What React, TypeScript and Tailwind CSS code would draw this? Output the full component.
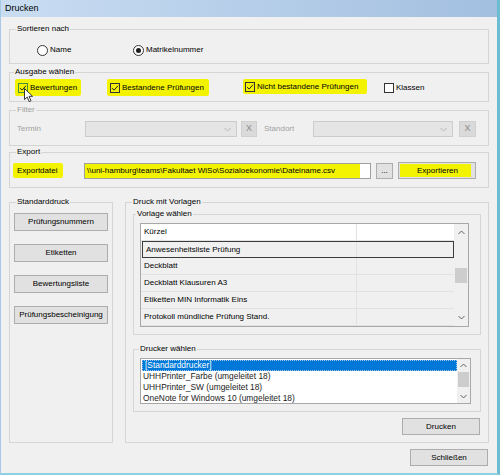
import React from "react";

interface GroupProps {
  label: string;
  className?: string;
  legendClass?: string;
  children?: React.ReactNode;
}

// Windows-style group box
const Group: React.FC<GroupProps> = ({
  label,
  className = "",
  legendClass = "",
  children,
}) => (
  <fieldset className={`border border-[#d5d5d5] ${className}`}>
    <legend className={`px-[1px] leading-[10px] ${legendClass}`}>
      {label}
    </legend>
    {children}
  </fieldset>
);

const Check = () => (
  <svg viewBox="0 0 10 10" width="8" height="8">
    <path
      d="M1.3 5.2 L3.9 7.6 L8.7 2.2"
      fill="none"
      stroke="#1e1e1e"
      strokeWidth="1.2"
    />
  </svg>
);

const CheckBox: React.FC<{ checked?: boolean; className?: string }> = ({
  checked,
  className = "border-[#333333]",
}) => (
  <span
    className={`w-[10px] h-[10px] shrink-0 border flex items-center justify-center ${className}`}
  >
    {checked && <Check />}
  </span>
);

const Radio: React.FC<{ checked?: boolean }> = ({ checked }) => (
  <span className="w-[11px] h-[11px] shrink-0 rounded-full border border-[#333333] bg-white flex items-center justify-center">
    {checked && <span className="w-[5px] h-[5px] rounded-full bg-[#1e1e1e]" />}
  </span>
);

const Chevron: React.FC<{ up?: boolean; color?: string }> = ({
  up,
  color = "#606060",
}) => (
  <svg width="7" height="5" viewBox="0 0 7 5">
    <path
      d={up ? "M0.5 4 L3.5 1 L6.5 4" : "M0.5 1 L3.5 4 L6.5 1"}
      fill="none"
      stroke={color}
      strokeWidth="1"
    />
  </svg>
);

interface WinButtonProps {
  className?: string;
  children?: React.ReactNode;
}

const WinButton: React.FC<WinButtonProps> = ({ className = "", children }) => (
  <button
    className={`shrink-0 bg-[#e1e1e1] border border-[#adadad] flex items-center justify-center leading-none text-black ${className}`}
  >
    {children}
  </button>
);

const vorlagen = [
  "Kürzel",
  "Anwesenheitsliste Prüfung",
  "Deckblatt",
  "Deckblatt Klausuren A3",
  "Etiketten MIN Informatik Eins",
  "Protokoll mündliche Prüfung Stand.",
];

const drucker = [
  "[Standarddrucker]",
  "UHHPrinter_Farbe (umgeleitet 18)",
  "UHHPrinter_SW (umgeleitet 18)",
  "OneNote for Windows 10 (umgeleitet 18)",
];

const App: React.FC = () => {
  return (
    <div className="relative w-[500px] h-[475px] bg-[#f0f0f0] flex flex-col border-l border-l-[#a9c9e8] border-r-[3px] border-r-[#6cbcd2] border-b-2 border-b-[#8dd0e3] font-['Liberation_Sans',Arial,sans-serif] text-[8px] text-black overflow-hidden">
      {/* Titelleiste */}
      <div className="h-[17px] shrink-0 flex items-center pl-[4px] text-[9px] bg-linear-to-r from-[#c9ddf2] to-[#a3bfe0]">
        Drucken
      </div>

      <div className="flex flex-col pl-[8px]">
        {/* Sortieren nach */}
        <Group
          label="Sortieren nach"
          className="mt-[7px] w-[480px] h-[40px]"
          legendClass="ml-[6px]"
        >
          <div className="h-[29px] pt-[3px] pl-[27px] flex items-center">
            <label className="w-[96px] flex items-center gap-[2px]">
              <Radio />
              <span>Name</span>
            </label>
            <label className="flex items-center gap-[2px]">
              <Radio checked />
              <span>Matrikelnummer</span>
            </label>
          </div>
        </Group>

        {/* Ausgabe wählen */}
        <Group
          label="Ausgabe wählen"
          className="mt-[3px] w-[480px] h-[35px]"
          legendClass="ml-[4px]"
        >
          <div className="h-[24px] pb-[3px] pl-[5px] flex items-center">
            <label className="w-[66px] h-[17px] pl-[3px] flex items-center gap-[2px] bg-[#f3f300] rounded-[2px]">
              <CheckBox checked className="border-[#4a8f3a]" />
              <span>Bewertungen</span>
            </label>
            <label className="ml-[26px] w-[102px] h-[17px] pl-[3px] flex items-center gap-[2px] bg-[#f3f300] rounded-[2px]">
              <CheckBox checked />
              <span>Bestandene Prüfungen</span>
            </label>
            <label className="ml-[34px] w-[124px] h-[15px] -mt-[2px] pl-[2px] flex items-center gap-[2px] bg-[#f3f300] rounded-[2px]">
              <CheckBox checked />
              <span>Nicht bestandene Prüfungen</span>
            </label>
            <label className="ml-[17px] flex items-center gap-[2px]">
              <CheckBox className="border-[#333333] bg-white" />
              <span>Klassen</span>
            </label>
          </div>
        </Group>

        {/* Filter (deaktiviert) */}
        <Group
          label="Filter"
          className="mt-[3px] w-[480px] h-[41px] text-[#a0a0a0]"
          legendClass="ml-[6px]"
        >
          <div className="pt-[6px] pl-[7px] flex items-center">
            <span className="w-[68px]">Termin</span>
            <div className="w-[152px] h-[16px] bg-[#e5e5e5] border border-[#cccccc] flex items-center justify-end pr-[5px]">
              <Chevron color="#b5b5b5" />
            </div>
            <div className="ml-[4px] w-[16px] h-[16px] bg-[#dadada] border border-[#d0d0d0] flex items-center justify-center text-[9px] text-[#8a8a8a]">
              X
            </div>
            <span className="ml-[7px] w-[49px]">Standort</span>
            <div className="w-[140px] h-[16px] bg-[#e5e5e5] border border-[#cccccc] flex items-center justify-end pr-[5px]">
              <Chevron color="#b5b5b5" />
            </div>
            <div className="ml-[6px] w-[17px] h-[16px] bg-[#dadada] border border-[#d0d0d0] flex items-center justify-center text-[9px] text-[#8a8a8a]">
              X
            </div>
          </div>
        </Group>

        {/* Export */}
        <Group
          label="Export"
          className="mt-[1px] w-[480px] h-[41px]"
          legendClass="ml-[6px]"
        >
          <div className="pt-[5px] pl-[3px] flex items-center">
            <span className="w-[50px] h-[15px] pl-[4px] flex items-center bg-[#f3f300] rounded-[2px]">
              Exportdatei
            </span>
            <div className="ml-[21px] w-[287px] h-[16px] bg-white border border-[#a0a0a0] flex items-stretch">
              <span className="w-[275px] pl-[2px] flex items-center bg-[#f3f300] whitespace-nowrap">
                \\uni-hamburg\teams\Fakultaet WiSo\Sozialoekonomie\Dateiname.csv
              </span>
            </div>
            <WinButton className="ml-[5px] w-[17px] h-[16px] text-[#555555]">
              ...
            </WinButton>
            <WinButton className="ml-[5px] w-[78px] h-[17px] p-[1px] justify-start">
              <span className="w-[71px] h-full bg-[#f3f300] flex items-center justify-center pl-[4px]">
                Exportieren
              </span>
            </WinButton>
          </div>
        </Group>

        {/* Unterer Bereich */}
        <div className="mt-[9px] flex">
          <Group
            label="Standarddruck"
            className="w-[104px] h-[246px]"
            legendClass="ml-[6px]"
          >
            <div className="pt-[6px] pl-[4px] flex flex-col gap-[13px]">
              <WinButton className="w-[94px] h-[18px]">Prüfungsnummern</WinButton>
              <WinButton className="w-[94px] h-[18px]">Etiketten</WinButton>
              <WinButton className="w-[94px] h-[18px]">Bewertungsliste</WinButton>
              <WinButton className="w-[94px] h-[18px]">
                Prüfungsbescheinigung
              </WinButton>
            </div>
          </Group>

          <Group
            label="Druck mit Vorlagen"
            className="ml-[12px] w-[364px] h-[246px]"
            legendClass="ml-[6px]"
          >
            <div className="pl-[7px] flex flex-col">
              <Group
                label="Vorlage wählen"
                className="mt-[2px] w-[348px] h-[126px]"
                legendClass="ml-[2px]"
              >
                <div className="mt-[4px] ml-[6px] w-[329px] h-[104px] border border-[#a8a8a8] flex">
                  <div className="flex-1 flex flex-col">
                    {vorlagen.map((item, index) => (
                      <div
                        key={index}
                        className={`h-[17px] flex ${
                          index === 0 ? "bg-white" : "bg-[#f0f0f0]"
                        } ${
                          index === 1
                            ? "border border-[#3c3c3c] ml-[1px]"
                            : "border-b border-[#e2e2e2]"
                        }`}
                      >
                        <div
                          className={`${
                            index === 1 ? "w-[214px]" : "w-[216px]"
                          } h-full flex items-center pl-[3px] border-r border-[#e2e2e2] whitespace-nowrap`}
                        >
                          {item}
                        </div>
                        <div className="flex-1" />
                      </div>
                    ))}
                  </div>
                  <div className="w-[14px] bg-[#f0f0f0] flex flex-col">
                    <div className="h-[17px] flex items-center justify-center">
                      <Chevron up />
                    </div>
                    <div className="mt-[27px] mx-[1px] h-[15px] bg-[#cdcdcd]" />
                    <div className="flex-1" />
                    <div className="h-[17px] flex items-center justify-center">
                      <Chevron />
                    </div>
                  </div>
                </div>
              </Group>

              <Group
                label="Drucker wählen"
                className="mt-[9px] w-[348px] h-[68px]"
                legendClass="ml-[5px]"
              >
                <div className="mt-[4px] ml-[6px] w-[331px] h-[46px] bg-white border border-[#a8a8a8] flex">
                  <div className="flex-1 flex flex-col pt-[1px] text-[8.4px]">
                    {drucker.map((item, index) => (
                      <div
                        key={index}
                        className={`h-[11px] flex items-center pl-[2px] whitespace-nowrap ${
                          index === 0
                            ? "bg-[#0078d7] text-white ml-[1px] border border-dotted border-[#9fc8ec]"
                            : "text-[#1a1a1a]"
                        }`}
                      >
                        {item}
                      </div>
                    ))}
                  </div>
                  <div className="w-[13px] bg-[#f0f0f0] flex flex-col">
                    <div className="h-[13px] flex items-center justify-center">
                      <Chevron up />
                    </div>
                    <div className="mx-[1px] h-[15px] bg-[#cdcdcd]" />
                    <div className="flex-1" />
                    <div className="h-[13px] flex items-center justify-center">
                      <Chevron />
                    </div>
                  </div>
                </div>
              </Group>

              <div className="mt-[6px] flex justify-end pr-[1px] w-[348px]">
                <WinButton className="w-[78px] h-[17px]">Drucken</WinButton>
              </div>
            </div>
          </Group>
        </div>

        <div className="mt-[6px] w-[480px] flex justify-end">
          <WinButton className="mr-[1px] w-[78px] h-[17px]">Schließen</WinButton>
        </div>
      </div>

      {/* Mauszeiger */}
      <svg
        className="absolute left-[23px] top-[88px]"
        width="10"
        height="15"
        viewBox="0 0 10 15"
      >
        <path
          d="M0.5 0.5 L0.5 11.5 L3.2 9 L5.2 13.6 L7 12.8 L5 8.3 L8.6 8.3 Z"
          fill="#ffffff"
          stroke="#222222"
          strokeWidth="0.9"
        />
      </svg>
    </div>
  );
};

export default App;
